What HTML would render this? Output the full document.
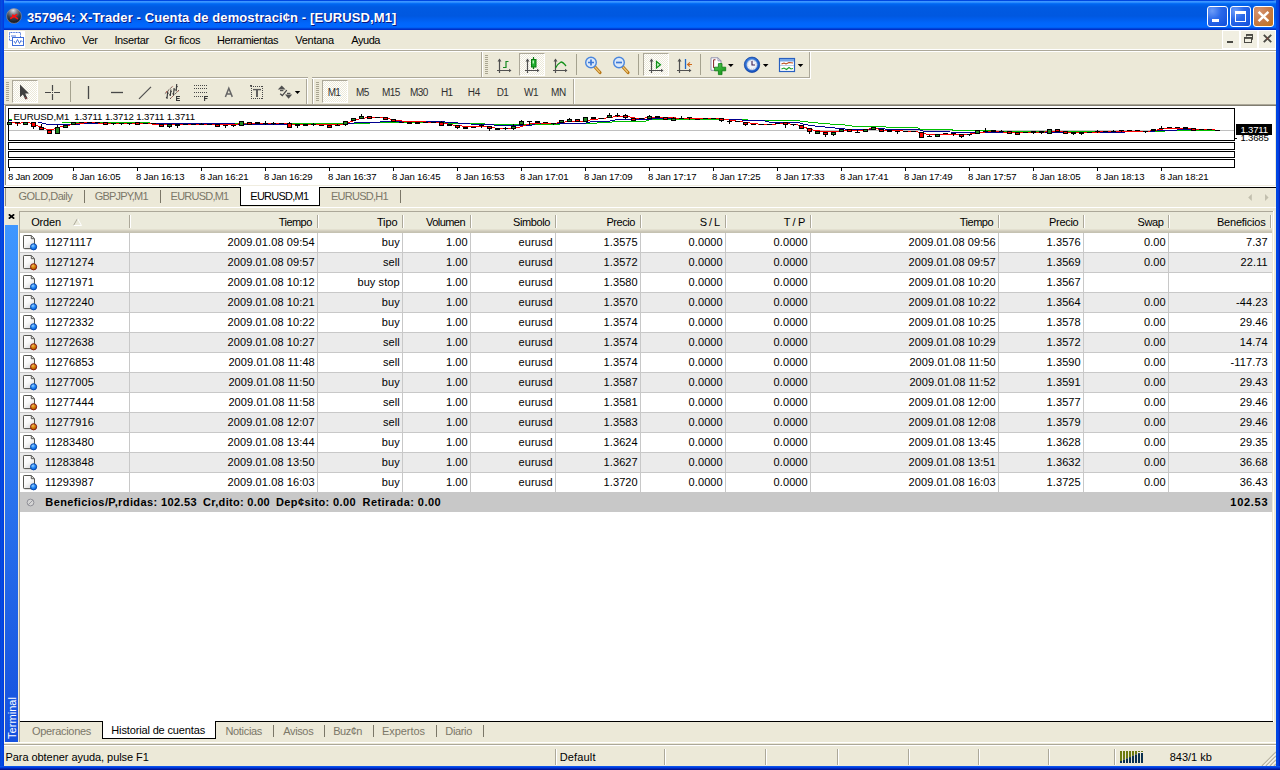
<!DOCTYPE html><html><head><meta charset="utf-8"><title>X-Trader</title><style>*{box-sizing:border-box;margin:0;padding:0}
html,body{width:1280px;height:770px;overflow:hidden;background:#ece9d8}
body{position:relative;font-family:"Liberation Sans",sans-serif;font-size:11px;color:#000}
.abs{position:absolute}
/* window frame */
#frameL{position:absolute;left:0;top:0;width:4px;height:770px;background:linear-gradient(90deg,#0831d9 0,#0855dd 1px,#0046e3 2px,#0046e3 3px,#0831d9 4px)}
#frameR{position:absolute;left:1276px;top:0;width:4px;height:770px;background:linear-gradient(90deg,#0046e3 0,#0046e3 2px,#0831d9 3px,#001ea0 4px)}
#frameB{position:absolute;left:0;top:766px;width:1280px;height:4px;background:linear-gradient(180deg,#0a52ea 0,#0a52ea 1px,#003ce0 1px,#003ce0 2px,#0026b8 2px,#0026b8 3px,#001494 3px)}
#title{position:absolute;left:0;top:0;width:1280px;height:30px;border-radius:7px 7px 0 0;
 background:linear-gradient(180deg,#0047e0 0,#0047e0 1px,#3c96ff 1.2px,#3c96ff 2.2px,#0a74fa 3px,#0064ee 4.5px,#005ae2 7px,#0058e0 16px,#005ff0 20px,#0066fb 23px,#0068ff 27px,#0058ea 28px,#0030c8 29px,#0030c8 30px)}
#tcorner{position:absolute;left:0;top:0;width:1280px;height:10px;background:#72aadf}
#title .txt{position:absolute;left:27px;top:9px;font-weight:bold;font-size:13px;letter-spacing:.11px;color:#fff;white-space:nowrap;text-shadow:1px 1px 0 #0a1883;line-height:17px}
.tb{position:absolute;top:6px;width:21px;height:21px;border:1px solid #fff;border-radius:3px;background:radial-gradient(circle at 22% 20%,#6c9cf8 0,#2b69ea 42%,#0f4dda 100%)}
.tb.close{background:radial-gradient(circle at 25% 22%,#d69470 0,#c67a4a 50%,#c27412 100%)}
/* menu */
#menu{position:absolute;left:4px;top:30px;width:1272px;height:20px;background:#ece9d8}
.mi{position:absolute;font-size:11px;line-height:14px;white-space:nowrap}
.hl{position:absolute;height:1px}
.vl{position:absolute;width:1px}
/* toolbars */
.grip{position:absolute;width:3px;height:19px;background:repeating-linear-gradient(180deg,#a9a591 0,#a9a591 1px,transparent 1px,transparent 2px)}
.pressed{position:absolute;border:1px solid;border-color:#aca899 #fff #fff #aca899;background-color:#f6f5ee;background-image:conic-gradient(#fff 25%,#ece9d8 0 50%,#fff 0 75%,#ece9d8 0);background-size:2px 2px}
.tsep{position:absolute;width:2px;height:20px;border-left:1px solid #aca899;border-right:1px solid #fff}
.per{position:absolute;font-size:10px;line-height:12px;color:#303030;white-space:nowrap}
/* chart */
.pane{position:absolute;border:1px solid #000}
.cl{position:absolute;font-size:9.6px;line-height:12px;white-space:nowrap;color:#000}
.xt{position:absolute;top:168px;width:1px;height:3px;background:#000}
/* chart tabs */
#ctabs{position:absolute;left:4px;top:188px;width:1272px;height:18px;background:#ece9d8}
.ct{position:absolute;font-size:11px;line-height:13px;color:#7b7768;white-space:nowrap}
.cts{position:absolute;top:2px;width:1px;height:13px;background:#7b7768}
/* terminal */
#term{position:absolute;left:4px;top:208px;width:1272px;height:534px;background:#ece9d8}
#list{position:absolute;left:20px;top:212px;width:1252px;height:509px;background:#fff;overflow:hidden}
#lhead{position:absolute;left:0;top:0;width:1252px;height:21px;background:linear-gradient(180deg,#ebeadb 0,#ebeadb 17px,#e2dfcf 17px,#e2dfcf 18px,#d6d2c2 18px,#d6d2c2 19px,#cbc7b8 19px,#cbc7b8 20px,#c5c2b2 20px)}
.hc{position:absolute;top:3px;height:14px;line-height:14px;font-size:11px;white-space:nowrap}
.hs{position:absolute;top:3px;width:2px;height:13px;border-left:1px solid #aca899;border-right:1px solid #fff}
.sort{position:absolute;left:53px;top:6px}
.row{position:absolute;left:0;width:1252px;height:20px;border-bottom:1px solid #c8c8c8;background:#fff}
.row.alt{background:#ebebeb}
.c{position:absolute;top:2px;height:14px;line-height:14px;font-size:11px;text-align:right;padding-right:2.2px;letter-spacing:.1px;white-space:nowrap}
.c0{text-align:left}
.c0 span{position:absolute;left:25px;top:0}
.ic{position:absolute;left:2px;top:0}
.vs{position:absolute;top:0;width:1px;height:20px;background:#c8c8c8}
#sum{position:absolute;left:0;width:1252px;height:20px;background:#c8c8c8;font-weight:bold;font-size:11px;line-height:14px}
#sum .st{position:absolute;top:3px;white-space:nowrap}
#sum .sv{position:absolute;right:4px;top:3px}
.sic{position:absolute;left:6px;top:6px}
/* bottom tabs */
.bt{position:absolute;font-size:11px;line-height:13px;color:#7b7768;white-space:nowrap}
.bts{position:absolute;top:725px;width:1px;height:12px;background:#7b7768}
/* status */
#status{position:absolute;left:4px;top:746px;width:1272px;height:20px;background:#ece9d8}
.sb{position:absolute;font-size:11px;line-height:13px;white-space:nowrap}
.ss{position:absolute;top:749px;width:2px;height:16px;border-left:1px solid #aca899;border-right:1px solid #fff}
</style></head><body>
<div id="tcorner"></div>
<div id="title">
 <svg class="abs" style="left:5.5px;top:7.5px" width="16" height="16" viewBox="0 0 16 16"><defs><radialGradient id="lg" cx="45%" cy="12%" r="85%"><stop offset="0" stop-color="#e0e0e6"/><stop offset=".3" stop-color="#85858f"/><stop offset=".6" stop-color="#3c4450"/><stop offset="1" stop-color="#14161e"/></radialGradient></defs><circle cx="8" cy="8" r="7.4" fill="url(#lg)" stroke="#9a9aa4" stroke-width=".6"/><path d="M4.8 10.3 L10.6 6.6 M6.8 7.2 L11.4 10.6" stroke="#ff1010" stroke-width="1.7" stroke-linecap="round"/></svg>
 <div class="txt" id="ttxt">357964: X-Trader - Cuenta de demostraci¢n - [EURUSD,M1]</div>
 <div class="tb" style="left:1207px"><div class="abs" style="left:4px;top:12px;width:7px;height:3px;background:#fff"></div></div>
 <div class="tb" style="left:1230px"><div class="abs" style="left:4px;top:4px;width:11px;height:11px;border:1px solid #fff;border-top-width:3px"></div></div>
 <div class="tb close" style="left:1253px"><svg class="abs" style="left:3px;top:3px" width="13" height="13" viewBox="0 0 13 13"><path d="M1.6 1.8 L11.4 11.2 M11.4 1.8 L1.6 11.2" stroke="#fff" stroke-width="2.5"/></svg></div>
</div>
<div id="frameL"></div><div id="frameR"></div><div id="frameB"></div>
<!-- menu -->
<div id="menu">
 <svg class="abs" style="left:4px;top:1px" width="17" height="17" viewBox="0 0 17 17"><rect x="0" y="0" width="17" height="17" fill="#fff"/><rect x="1.5" y="1.5" width="11" height="8" fill="#fff" stroke="#3c6cd8" stroke-dasharray="1 .6"/><rect x="4.5" y="6.5" width="11" height="8" fill="#fff" stroke="#3c6cd8"/><path d="M6 10 L7.5 12.5 L9.5 8.5 L11.5 12.5 L13 9.5 L14.5 11" fill="none" stroke="#3c6cd8" stroke-width=".9"/><path d="M3 5 H8" stroke="#3c6cd8" stroke-width=".9"/></svg>
 
 
 
 
 
 
 
 <!-- mdi buttons -->
 <div class="abs" style="left:1218px;top:0;width:54px;height:19px;background:#fff"></div>
 <div class="abs" style="left:1219px;top:1px;width:16px;height:17px;background:#f1efe2"><div class="abs" style="left:4px;top:10px;width:6px;height:2px;background:#4a4a44"></div></div>
 <div class="abs" style="left:1237px;top:1px;width:16px;height:17px;background:#f1efe2"><svg class="abs" style="left:3px;top:3px" width="10" height="10" viewBox="0 0 10 10"><path d="M2.5 2.5 V.5 H8.5 V5.5 H7.5" fill="none" stroke="#4a4a44"/><path d="M2 1 H9" stroke="#4a4a44" stroke-width="1.8"/><rect x=".5" y="3.5" width="7" height="5" fill="none" stroke="#4a4a44"/><path d="M0 4 H7.5" stroke="#4a4a44" stroke-width="1.8"/></svg></div>
 <div class="abs" style="left:1255px;top:1px;width:16px;height:17px;background:#f1efe2"><svg class="abs" style="left:3.5px;top:3px" width="9" height="9" viewBox="0 0 9 9"><path d="M.8 .8 L8.2 8.2 M8.2 .8 L.8 8.2" stroke="#4a4a44" stroke-width="1.9"/><rect x="3.5" y="3.5" width="2" height="2" fill="#7a4a40"/></svg></div>
</div>
<span class="mi" style="left:30.3px;top:33px;letter-spacing:-0.283px;">Archivo</span><span class="mi" style="left:82px;top:33px;letter-spacing:-0.237px;">Ver</span><span class="mi" style="left:114.4px;top:33px;letter-spacing:-0.361px;">Insertar</span><span class="mi" style="left:164.4px;top:33px;letter-spacing:-0.249px;">Gr&nbsp;ficos</span><span class="mi" style="left:217px;top:33px;letter-spacing:-0.419px;">Herramientas</span><span class="mi" style="left:295.3px;top:33px;letter-spacing:-0.268px;">Ventana</span><span class="mi" style="left:351.3px;top:33px;letter-spacing:-0.458px;">Ayuda</span>
<div class="hl" style="left:4px;top:49px;width:1272px;background:#fff"></div>
<div class="hl" style="left:4px;top:50px;width:1272px;background:#aca899"></div>
<div class="hl" style="left:4px;top:51px;width:1272px;background:#fff"></div>
<!-- toolbar row 1 -->
<div class="vl" style="left:481px;top:52px;height:25px;background:#aca899"></div>
<div class="vl" style="left:482px;top:52px;height:25px;background:#fff"></div>
<div class="grip" style="left:485px;top:55px"></div>
<div class="vl" style="left:809px;top:52px;height:25px;background:#aca899"></div>
<div class="vl" style="left:810px;top:52px;height:27px;background:#fff"></div>
<div class="hl" style="left:4px;top:77px;width:806px;background:#aca899"></div>
<div class="hl" style="left:4px;top:78px;width:807px;background:#fff"></div>
<div class="abs" style="left:308px;top:77px;width:4px;height:2px;background:#ece9d8"></div>
<!-- toolbar row 2 -->
<div class="grip" style="left:6px;top:82px"></div>
<div class="vl" style="left:306px;top:79px;height:25px;background:#aca899"></div>
<div class="vl" style="left:307px;top:79px;height:25px;background:#fff"></div>
<div class="vl" style="left:312px;top:79px;height:25px;background:#aca899"></div>
<div class="vl" style="left:313px;top:79px;height:25px;background:#fff"></div>
<div class="grip" style="left:316px;top:82px"></div>
<div class="vl" style="left:573px;top:79px;height:25px;background:#aca899"></div>
<div class="vl" style="left:574px;top:79px;height:25px;background:#fff"></div>
<div class="pressed" style="left:12px;top:80px;width:26px;height:23px"></div>
<div class="pressed" style="left:519px;top:53px;width:26px;height:23px"></div>
<div class="pressed" style="left:643px;top:53px;width:26px;height:23px"></div>
<svg class="abs" style="left:0;top:0" width="1280" height="110" viewBox="0 0 1280 110">
<defs>
 <radialGradient id="clk" cx="45%" cy="40%" r="60%"><stop offset="0" stop-color="#5aa0f0"/><stop offset="1" stop-color="#1450c0"/></radialGradient>
 <linearGradient id="gplus" x1="0" y1="0" x2="1" y2="1"><stop offset="0" stop-color="#58d058"/><stop offset="1" stop-color="#0a8a10"/></linearGradient>
 <linearGradient id="hnd" x1="0" y1="0" x2="1" y2="0"><stop offset="0" stop-color="#f0c878"/><stop offset="1" stop-color="#b87818"/></linearGradient>
</defs>
<g id="tb2" stroke-linecap="butt">
 <!-- arrow cursor -->
 <path d="M20 84.5 L20 97.2 L22.9 94.6 L25.3 99.6 L27.6 98.5 L25.2 93.6 L29 93.6 Z" fill="#404040"/>
 <path d="M25.4 97 L26.6 99.2" stroke="#a04040" stroke-width="1"/>
 <!-- crosshair -->
 <path d="M45 92.5 H51 M54 92.5 H60 M52.5 85 V91 M52.5 94 V100" stroke="#484848" stroke-width="1.2"/>
 <rect x="52" y="92" width="1" height="1" fill="#484848"/>
 <!-- sep -->
 <path d="M70.5 81 V102" stroke="#a5a28f"/>
 <!-- vline, hline, diagonal -->
 <path d="M88.5 86 V99" stroke="#484848" stroke-width="1.3"/>
 <path d="M111 92.5 H123" stroke="#484848" stroke-width="1.3"/>
 <path d="M139 98.8 L151 86.8" stroke="#505050" stroke-width="1.2"/>
 <!-- channel E -->
 <path d="M164.9 93.6 L172.8 86.1 M170.1 98.8 L179 90.2" stroke="#4a3838" stroke-width="1" stroke-dasharray="1.3 .9" fill="none"/>
 <path d="M166 92.3 L167 91.5 M172 87.2 L172.6 86.6 M171.6 97.4 L172.4 96.6 M177.6 91.6 L178.4 90.8" stroke="#c04030" stroke-width="1"/>
 <g stroke="#3c3c3c" stroke-width="1.15" fill="none">
  <path d="M167.7 91.2 L167 98.9 M166 97.4 L167.1 97.8 M167.6 93 L168.6 93.4"/>
  <path d="M170.9 89.5 L170.3 96 M169.3 94.6 L170.4 95 M170.8 91.2 L171.8 91.6"/>
  <path d="M174.1 88 L173.5 95.1 M172.5 93.6 L173.6 94 M174 89.6 L175 90"/>
  <path d="M176.7 84 L176.2 91.3 M175.2 89.8 L176.3 90.2 M176.6 86.2 L177.7 86.6"/>
 </g>
 <path d="M176.6 96 V101 M176 96.5 H180 M176 98.5 H179.6 M176 100.5 H180" stroke="#383838" stroke-width="1.1" fill="none"/>
 <!-- fibo F -->
 <g stroke="#484848" stroke-width="1" stroke-dasharray="1 1">
  <path d="M194 85.5 H207 M194 88.5 H207 M194 92.5 H207 M194 96.5 H203"/>
 </g>
 <path d="M204.6 96 V101 M204 96.5 H208 M204 98.5 H207.4" stroke="#383838" stroke-width="1.1" fill="none"/>
 <!-- A -->
 <path d="M225.4 96.9 L228.8 88.2 L232.3 96.9 M226.7 94 H231" stroke="#666" stroke-width="1.5" fill="none"/>
 <!-- T box -->
 <path d="M251 86.5 H263 M251 98.5 H263 M251.5 86 V99 M262.5 86 V99" fill="none" stroke="#484848" stroke-dasharray="1 1"/>
 <rect x="250" y="85" width="2" height="1.6" fill="#484848"/>
 <path d="M253 89.6 H261" stroke="#5a5a5a" stroke-width="1.4"/><path d="M257 89.6 V96.9" stroke="#5a5a5a" stroke-width="1.9"/>
 <!-- arrows icon -->
 <path d="M277.8 89.5 L281.7 85.6 L285.6 89.5 Z" fill="#505050"/>
 <rect x="280" y="90" width="3.4" height="1.2" fill="#505050"/>
 <path d="M280.2 93.8 L282.3 95.6 L286.8 90.2" stroke="#484848" stroke-width="1.3" fill="none"/>
 <rect x="287" y="92.8" width="3.4" height="1.2" fill="#505050"/>
 <path d="M285 94.5 L292.2 94.5 L288.6 98.7 Z" fill="#505050"/>
 <path d="M294.8 91 H300.2 L297.5 94 Z" fill="#000"/>
</g>
<g id="tb1">
 <!-- bar chart icon -->
 <g stroke="#505050" stroke-width="1.2" fill="none">
  <path d="M499.5 59.5 V73 M497 70.5 H510"/>
  <path d="M527.5 59.5 V73 M525 70.5 H538"/>
  <path d="M555.5 59.5 V73 M553 70.5 H566"/>
  <path d="M651.5 59.5 V73 M649 70.5 H662"/>
  <path d="M679.5 59.5 V73 M677 70.5 H690"/>
 </g>
 <g fill="#505050">
  <path d="M497.5 61.5 L499.5 58.5 L501.5 61.5 Z M509 68.8 L511.5 70.5 L509 72.2 Z"/>
  <path d="M525.5 61.5 L527.5 58.5 L529.5 61.5 Z M537 68.8 L539.5 70.5 L537 72.2 Z"/>
  <path d="M553.5 61.5 L555.5 58.5 L557.5 61.5 Z M565 68.8 L567.5 70.5 L565 72.2 Z"/>
  <path d="M649.5 61.5 L651.5 58.5 L653.5 61.5 Z M661 68.8 L663.5 70.5 L661 72.2 Z"/>
  <path d="M677.5 61.5 L679.5 58.5 L681.5 61.5 Z M689 68.8 L691.5 70.5 L689 72.2 Z"/>
 </g>
 <path d="M506 61 V68 M503 67.5 H506 M506 61.5 H508.5" stroke="#168a20" stroke-width="1.2" fill="none"/>
 <!-- candle -->
 <path d="M533.5 57 V69" stroke="#0a7a10" stroke-width="1.2"/>
 <rect x="531.5" y="59.5" width="4.5" height="7.5" fill="#22b030" stroke="#0a7a10" stroke-width="1"/>
 <rect x="532.5" y="60.5" width="1.5" height="3" fill="#b8f0b8"/>
 <!-- line -->
 <path d="M555.5 68 Q558 63.5 561 62 Q563 62 566 66" stroke="#109018" stroke-width="1.3" fill="none"/>
 <!-- seps -->
 <path d="M576.5 54 V75 M638.5 54 V75 M700.5 54 V75" stroke="#a5a28f"/>
 <!-- zoom in -->
 <path d="M594.5 66.5 L600 72.5" stroke="#b87818" stroke-width="3.2" stroke-linecap="round"/>
 <path d="M594.2 66.2 L599.5 72" stroke="#f0c878" stroke-width="1.2" stroke-linecap="round"/>
 <circle cx="591" cy="62.5" r="5.3" fill="#dbe9f9" stroke="#4a86dc" stroke-width="1.4"/>
 <path d="M588 62.5 H594 M591 59.5 V65.5" stroke="#3c78d6" stroke-width="1.7"/>
 <!-- zoom out -->
 <path d="M622.5 66.5 L628 72.5" stroke="#b87818" stroke-width="3.2" stroke-linecap="round"/>
 <path d="M622.2 66.2 L627.5 72" stroke="#f0c878" stroke-width="1.2" stroke-linecap="round"/>
 <circle cx="619" cy="62.5" r="5.3" fill="#dbe9f9" stroke="#4a86dc" stroke-width="1.4"/>
 <path d="M616 62.5 H622" stroke="#3c78d6" stroke-width="1.7"/>
 <!-- play triangle -->
 <path d="M656.5 61.5 L660.5 64.7 L656.5 68 Z" fill="#c8f0c8" stroke="#109018" stroke-width="1.2"/>
 <!-- shift -->
 <path d="M685.5 59 V69" stroke="#2068c8" stroke-width="1.3"/>
 <path d="M687.5 64.5 H692 M690 62.3 L687.5 64.5 L690 66.7" stroke="#d06818" stroke-width="1.1" fill="none"/>
 <!-- new chart -->
 <path d="M711 57.8 H718 L721 60.8 V70.3 H711 Z" fill="#fff" stroke="#8888a8" stroke-width=".9"/>
 <path d="M718 57.8 V60.8 H721" fill="none" stroke="#8888a8" stroke-width=".9"/>
 <path d="M715.5 59.8 H713.6 V67.8 H715" stroke="#802020" stroke-width="1" fill="none"/>
 <path d="M718.4 63.6 H722 V67.2 H725.7 V70.8 H722 V74.6 H718.4 V70.8 H714.6 V67.2 H718.4 Z" fill="url(#gplus)" stroke="#0a7a10" stroke-width=".8"/>
 <path d="M728 64 H733.6 L730.8 67 Z" fill="#000"/>
 <!-- clock -->
 <circle cx="752" cy="64.8" r="7.7" fill="url(#clk)" stroke="#0c3c9c" stroke-width=".7"/>
 <circle cx="752" cy="64.8" r="5.2" fill="#f0f4fa" stroke="#88a8d8" stroke-width=".6"/><circle cx="752" cy="64.8" r="4.2" fill="none" stroke="#b0b0b8" stroke-width=".8" stroke-dasharray=".7 1.5"/>
 <path d="M752 61 V65 H755" stroke="#402050" stroke-width="1.1" fill="none"/>
 <path d="M762.9 64 H768.5 L765.7 67 Z" fill="#000"/>
 <!-- template -->
 <rect x="779.5" y="58.5" width="15" height="13" fill="#fff" stroke="#2860c0" stroke-width="1.2"/>
 <rect x="780" y="59" width="14" height="2.5" fill="#78a8e8"/>
 <path d="M780 65.5 H794" stroke="#a8c0e0" stroke-width=".8"/>
 <path d="M781.5 64 L784 63 L786 64 L789 62.5 L793 63" stroke="#b84818" stroke-width="1.1" fill="none"/>
 <path d="M781.5 69 L784 68 L786.5 69.5 L789 67.5 L791 69 L793 68.5" stroke="#18a028" stroke-width="1.1" fill="none"/>
 <path d="M797.7 64 H803.3 L800.5 67 Z" fill="#000"/>
</g>
</svg>

<div class="pressed" style="left:322px;top:80px;width:26px;height:23px"></div>
<span class="per" style="left:327.7px;top:87px;letter-spacing:-0.646px;">M1</span><span class="per" style="left:356px;top:87px;letter-spacing:-0.596px;">M5</span><span class="per" style="left:382px;top:87px;letter-spacing:-0.618px;">M15</span><span class="per" style="left:410px;top:87px;letter-spacing:-0.584px;">M30</span><span class="per" style="left:440.9px;top:87px;letter-spacing:-0.642px;">H1</span><span class="per" style="left:467.7px;top:87px;letter-spacing:-0.042px;">H4</span><span class="per" style="left:496.7px;top:87px;letter-spacing:-0.592px;">D1</span><span class="per" style="left:524.1px;top:87px;letter-spacing:-0.45px;">W1</span><span class="per" style="left:551px;top:87px;letter-spacing:-0.376px;">MN</span>
<div class="hl" style="left:4px;top:104px;width:1272px;background:#aca899"></div>
<!-- chart -->
<div class="abs" style="left:4px;top:105px;width:1272px;height:80px;background:#fff"></div>
<div class="hl" style="left:4px;top:105px;width:1272px;background:#7f7c70"></div>
<div class="vl" style="left:4px;top:105px;height:80px;background:#ece9d8"></div>
<div class="vl" style="left:5px;top:105px;height:80px;background:#8f8c80"></div>
<div class="vl" style="left:1275px;top:106px;height:79px;background:#ece9d8"></div>
<div class="pane" style="left:8px;top:108px;width:1227px;height:33px"></div>
<div class="pane" style="left:8px;top:142px;width:1227px;height:8px"></div>
<div class="pane" style="left:8px;top:151px;width:1227px;height:7px"></div>
<div class="pane" style="left:8px;top:159px;width:1227px;height:9px"></div>
<svg class="abs" style="left:0;top:100px" width="1280" height="90" viewBox="0 100 1280 90" shape-rendering="crispEdges"><path d="M9 130.5 H1234" stroke="#c0c0c0" stroke-width="1"/><polyline points="62,122.3 100,122.6 235,123.7 345,123.7 400,122.2 440,122.5 455,123.5 485,124 520,124.5 535,124.5 585,123.5 610,122.5 615,121.3 645,121.3 650,119.8 700,119.8 720,119.3 740,119.5 760,120.8 800,121 815,122.8 830,124 845,125 855,126.5 885,126.5 887,127.3 917,127.5 920,129 950,129 953,130.2 975,130.6 1000,131.2 1110,131.3 1120,131 1165,131 1167,130 1195,130 1215,130" fill="none" stroke="#00c000" stroke-width="1" stroke-linejoin="round"/><polyline points="9,119.5 11.5,119.5" fill="none" stroke="#00c000" stroke-width="1" stroke-linejoin="round"/><polyline points="9,120.5 11.5,120.5" fill="none" stroke="#000090" stroke-width="1" stroke-linejoin="round"/><polyline points="38,122 48,124.5 70,124.5 80,124 100,123.6 235,124 265,124.3 345,124.3 350,123.3 365,122.3 395,121.7 440,121.6 470,124 485,124.3 500,125.5 530,125.5 535,124 585,123.3 590,122 610,121 615,120 635,119.5 650,119.3 655,118.5 715,118.5 725,119.4 740,119.4 745,120.8 765,121 770,122.3 790,122.3 800,123 805,124.5 815,126 830,127.5 845,129 860,130 867,129.5 875,128.5 885,129 900,129.5 920,130 925,131.5 950,132 975,132.3 1050,132.3 1115,132.3 1150,131.3 1165,130.5 1190,129.5 1215,130" fill="none" stroke="#000090" stroke-width="1" stroke-linejoin="round"/><polyline points="9,122.3 13,122.3 16,123.2 20,123.2 23,122.3 28,122.3 33,124 41,127 47,129.3 52,129.5 57,128 62,126.5 70,125 78,123.5 85,122.9 120,123.2 160,124.2 235,124.5 245,123 285,123.5 300,124.8 340,124.8 345,123.5 353,121 361,118.5 369,117.5 385,118 395,120 405,121.5 438,122.3 445,123.5 455,125.3 470,126.8 485,126.5 495,128 510,128.8 518,127.8 524,125.5 530,123.9 540,123 556,123.2 562,122.3 572,121.2 582,121.7 590,120 600,118.7 610,117.5 620,116 630,117 635,118 645,118 660,117.2 680,118.2 715,118.7 725,119.5 735,120.8 745,122.3 755,123.8 765,124.5 780,123.8 790,124 798,125 805,127.5 812,129.8 820,131 830,131.5 840,131 850,130.5 860,131 867,129.5 873,128 880,129.5 890,130.8 915,131.2 922,133 930,135 940,134.8 950,134.3 965,134.5 975,133.5 985,132 1000,131.8 1010,132.5 1040,132.5 1050,131.5 1060,131.2 1070,132.5 1085,133 1100,132 1120,131 1150,131 1160,129.5 1165,128.5 1170,128 1190,128 1195,129 1210,129.8 1215,130" fill="none" stroke="#ff0000" stroke-width="1" stroke-linejoin="round"/><rect x="7" y="122" width="5" height="3" fill="#000"/><rect x="8" y="123" width="3" height="1" fill="#228b22"/><rect x="17" y="122" width="1" height="4" fill="#000"/><rect x="15" y="122" width="5" height="1" fill="#000"/><rect x="23" y="122" width="5" height="3" fill="#000"/><rect x="24" y="123" width="3" height="1" fill="#228b22"/><rect x="33" y="122" width="1" height="7" fill="#000"/><rect x="31" y="122" width="5" height="5" fill="#000"/><rect x="32" y="123" width="3" height="3" fill="#ff0000"/><rect x="41" y="124" width="1" height="6" fill="#000"/><rect x="39" y="127" width="5" height="3" fill="#000"/><rect x="40" y="128" width="3" height="1" fill="#ff0000"/><rect x="47" y="130" width="5" height="4" fill="#000"/><rect x="48" y="131" width="3" height="2" fill="#ff0000"/><rect x="57" y="125" width="1" height="9" fill="#000"/><rect x="55" y="127" width="5" height="7" fill="#000"/><rect x="56" y="128" width="3" height="5" fill="#228b22"/><rect x="63" y="125" width="5" height="3" fill="#000"/><rect x="64" y="126" width="3" height="1" fill="#228b22"/><rect x="71" y="122" width="5" height="3" fill="#000"/><rect x="72" y="123" width="3" height="1" fill="#228b22"/><rect x="79" y="122" width="5" height="1" fill="#000"/><rect x="87" y="122" width="5" height="1" fill="#000"/><rect x="95" y="122" width="5" height="1" fill="#000"/><rect x="103" y="122" width="5" height="3" fill="#000"/><rect x="104" y="123" width="3" height="1" fill="#ff0000"/><rect x="113" y="123" width="1" height="2" fill="#000"/><rect x="111" y="123" width="5" height="1" fill="#000"/><rect x="121" y="123" width="1" height="2" fill="#000"/><rect x="119" y="123" width="5" height="1" fill="#000"/><rect x="129" y="123" width="1" height="2" fill="#000"/><rect x="127" y="123" width="5" height="1" fill="#000"/><rect x="135" y="122" width="5" height="3" fill="#000"/><rect x="136" y="123" width="3" height="1" fill="#ff0000"/><rect x="143" y="123" width="5" height="1" fill="#000"/><rect x="151" y="123" width="5" height="1" fill="#000"/><rect x="159" y="124" width="5" height="3" fill="#000"/><rect x="160" y="125" width="3" height="1" fill="#ff0000"/><rect x="169" y="124" width="1" height="4" fill="#000"/><rect x="167" y="124" width="5" height="3" fill="#000"/><rect x="168" y="125" width="3" height="1" fill="#228b22"/><rect x="177" y="124" width="1" height="4" fill="#000"/><rect x="175" y="124" width="5" height="2" fill="#000"/><rect x="183" y="124" width="5" height="1" fill="#000"/><rect x="191" y="124" width="5" height="1" fill="#000"/><rect x="201" y="123" width="1" height="2" fill="#000"/><rect x="199" y="124" width="5" height="1" fill="#000"/><rect x="207" y="124" width="5" height="1" fill="#000"/><rect x="215" y="124" width="5" height="3" fill="#000"/><rect x="216" y="125" width="3" height="1" fill="#ff0000"/><rect x="225" y="125" width="1" height="3" fill="#000"/><rect x="223" y="125" width="5" height="1" fill="#000"/><rect x="233" y="125" width="1" height="2" fill="#000"/><rect x="231" y="125" width="5" height="1" fill="#000"/><rect x="239" y="121" width="5" height="5" fill="#000"/><rect x="240" y="122" width="3" height="3" fill="#228b22"/><rect x="247" y="122" width="5" height="3" fill="#000"/><rect x="248" y="123" width="3" height="1" fill="#ff0000"/><rect x="255" y="122" width="5" height="2" fill="#000"/><rect x="265" y="121" width="1" height="4" fill="#000"/><rect x="263" y="123" width="5" height="1" fill="#000"/><rect x="273" y="122" width="1" height="3" fill="#000"/><rect x="271" y="123" width="5" height="1" fill="#000"/><rect x="279" y="123" width="5" height="1" fill="#000"/><rect x="289" y="122" width="1" height="6" fill="#000"/><rect x="287" y="123" width="5" height="5" fill="#000"/><rect x="288" y="124" width="3" height="3" fill="#ff0000"/><rect x="297" y="124" width="1" height="4" fill="#000"/><rect x="295" y="124" width="5" height="2" fill="#000"/><rect x="303" y="124" width="5" height="2" fill="#000"/><rect x="313" y="123" width="1" height="3" fill="#000"/><rect x="311" y="124" width="5" height="1" fill="#000"/><rect x="319" y="125" width="5" height="1" fill="#000"/><rect x="327" y="125" width="5" height="3" fill="#000"/><rect x="328" y="126" width="3" height="1" fill="#ff0000"/><rect x="337" y="124" width="1" height="2" fill="#000"/><rect x="335" y="125" width="5" height="1" fill="#000"/><rect x="345" y="121" width="1" height="5" fill="#000"/><rect x="343" y="121" width="5" height="4" fill="#000"/><rect x="344" y="122" width="3" height="2" fill="#228b22"/><rect x="351" y="118" width="5" height="3" fill="#000"/><rect x="352" y="119" width="3" height="1" fill="#228b22"/><rect x="361" y="114" width="1" height="5" fill="#000"/><rect x="359" y="116" width="5" height="3" fill="#000"/><rect x="360" y="117" width="3" height="1" fill="#228b22"/><rect x="367" y="116" width="5" height="3" fill="#000"/><rect x="368" y="117" width="3" height="1" fill="#ff0000"/><rect x="375" y="117" width="5" height="1" fill="#000"/><rect x="383" y="117" width="5" height="3" fill="#000"/><rect x="384" y="118" width="3" height="1" fill="#ff0000"/><rect x="391" y="119" width="5" height="3" fill="#000"/><rect x="392" y="120" width="3" height="1" fill="#ff0000"/><rect x="399" y="122" width="5" height="1" fill="#000"/><rect x="407" y="122" width="5" height="2" fill="#000"/><rect x="415" y="122" width="5" height="2" fill="#000"/><rect x="423" y="122" width="5" height="1" fill="#000"/><rect x="431" y="122" width="5" height="1" fill="#000"/><rect x="441" y="121" width="1" height="5" fill="#000"/><rect x="439" y="122" width="5" height="4" fill="#000"/><rect x="440" y="123" width="3" height="2" fill="#ff0000"/><rect x="447" y="124" width="5" height="2" fill="#000"/><rect x="457" y="125" width="1" height="4" fill="#000"/><rect x="455" y="125" width="5" height="3" fill="#000"/><rect x="456" y="126" width="3" height="1" fill="#ff0000"/><rect x="463" y="127" width="5" height="2" fill="#000"/><rect x="471" y="127" width="5" height="1" fill="#000"/><rect x="481" y="124" width="1" height="4" fill="#000"/><rect x="479" y="125" width="5" height="1" fill="#000"/><rect x="489" y="126" width="1" height="5" fill="#000"/><rect x="487" y="126" width="5" height="3" fill="#000"/><rect x="488" y="127" width="3" height="1" fill="#ff0000"/><rect x="495" y="128" width="5" height="2" fill="#000"/><rect x="505" y="127" width="1" height="3" fill="#000"/><rect x="503" y="128" width="5" height="1" fill="#000"/><rect x="513" y="124" width="1" height="6" fill="#000"/><rect x="511" y="126" width="5" height="3" fill="#000"/><rect x="512" y="127" width="3" height="1" fill="#228b22"/><rect x="521" y="120" width="1" height="5" fill="#000"/><rect x="519" y="121" width="5" height="4" fill="#000"/><rect x="520" y="122" width="3" height="2" fill="#228b22"/><rect x="529" y="121" width="1" height="4" fill="#000"/><rect x="527" y="121" width="5" height="1" fill="#000"/><rect x="535" y="121" width="5" height="2" fill="#000"/><rect x="543" y="122" width="5" height="1" fill="#000"/><rect x="553" y="123" width="1" height="2" fill="#000"/><rect x="551" y="123" width="5" height="1" fill="#000"/><rect x="559" y="120" width="5" height="3" fill="#000"/><rect x="560" y="121" width="3" height="1" fill="#228b22"/><rect x="569" y="118" width="1" height="4" fill="#000"/><rect x="567" y="119" width="5" height="3" fill="#000"/><rect x="568" y="120" width="3" height="1" fill="#228b22"/><rect x="575" y="119" width="5" height="3" fill="#000"/><rect x="576" y="120" width="3" height="1" fill="#ff0000"/><rect x="583" y="117" width="5" height="5" fill="#000"/><rect x="584" y="118" width="3" height="3" fill="#228b22"/><rect x="591" y="117" width="5" height="2" fill="#000"/><rect x="599" y="118" width="5" height="1" fill="#000"/><rect x="609" y="113" width="1" height="5" fill="#000"/><rect x="607" y="115" width="5" height="3" fill="#000"/><rect x="608" y="116" width="3" height="1" fill="#228b22"/><rect x="617" y="113" width="1" height="4" fill="#000"/><rect x="615" y="115" width="5" height="1" fill="#000"/><rect x="625" y="114" width="1" height="5" fill="#000"/><rect x="623" y="115" width="5" height="3" fill="#000"/><rect x="624" y="116" width="3" height="1" fill="#ff0000"/><rect x="631" y="118" width="5" height="3" fill="#000"/><rect x="632" y="119" width="3" height="1" fill="#ff0000"/><rect x="639" y="118" width="5" height="1" fill="#000"/><rect x="649" y="115" width="1" height="4" fill="#000"/><rect x="647" y="116" width="5" height="3" fill="#000"/><rect x="648" y="117" width="3" height="1" fill="#228b22"/><rect x="655" y="116" width="5" height="2" fill="#000"/><rect x="663" y="117" width="5" height="3" fill="#000"/><rect x="664" y="118" width="3" height="1" fill="#ff0000"/><rect x="673" y="117" width="1" height="4" fill="#000"/><rect x="671" y="118" width="5" height="3" fill="#000"/><rect x="672" y="119" width="3" height="1" fill="#228b22"/><rect x="681" y="116" width="1" height="3" fill="#000"/><rect x="679" y="118" width="5" height="1" fill="#000"/><rect x="689" y="117" width="1" height="3" fill="#000"/><rect x="687" y="117" width="5" height="1" fill="#000"/><rect x="695" y="119" width="5" height="1" fill="#000"/><rect x="703" y="118" width="5" height="1" fill="#000"/><rect x="711" y="118" width="5" height="1" fill="#000"/><rect x="721" y="118" width="1" height="4" fill="#000"/><rect x="719" y="118" width="5" height="3" fill="#000"/><rect x="720" y="119" width="3" height="1" fill="#ff0000"/><rect x="729" y="120" width="1" height="4" fill="#000"/><rect x="727" y="121" width="5" height="1" fill="#000"/><rect x="735" y="121" width="5" height="1" fill="#000"/><rect x="745" y="122" width="1" height="4" fill="#000"/><rect x="743" y="122" width="5" height="3" fill="#000"/><rect x="744" y="123" width="3" height="1" fill="#ff0000"/><rect x="751" y="124" width="5" height="1" fill="#000"/><rect x="759" y="124" width="5" height="1" fill="#000"/><rect x="767" y="124" width="5" height="1" fill="#000"/><rect x="775" y="123" width="5" height="1" fill="#000"/><rect x="785" y="122" width="1" height="6" fill="#000"/><rect x="783" y="122" width="5" height="3" fill="#000"/><rect x="784" y="123" width="3" height="1" fill="#ff0000"/><rect x="793" y="124" width="1" height="2" fill="#000"/><rect x="791" y="124" width="5" height="1" fill="#000"/><rect x="799" y="125" width="5" height="4" fill="#000"/><rect x="800" y="126" width="3" height="2" fill="#ff0000"/><rect x="809" y="128" width="1" height="6" fill="#000"/><rect x="807" y="128" width="5" height="4" fill="#000"/><rect x="808" y="129" width="3" height="2" fill="#ff0000"/><rect x="815" y="131" width="5" height="3" fill="#000"/><rect x="816" y="132" width="3" height="1" fill="#228b22"/><rect x="825" y="132" width="1" height="5" fill="#000"/><rect x="823" y="132" width="5" height="3" fill="#000"/><rect x="824" y="133" width="3" height="1" fill="#ff0000"/><rect x="833" y="132" width="1" height="4" fill="#000"/><rect x="831" y="132" width="5" height="3" fill="#000"/><rect x="832" y="133" width="3" height="1" fill="#228b22"/><rect x="839" y="129" width="5" height="3" fill="#000"/><rect x="840" y="130" width="3" height="1" fill="#228b22"/><rect x="847" y="129" width="5" height="3" fill="#000"/><rect x="848" y="130" width="3" height="1" fill="#ff0000"/><rect x="857" y="130" width="1" height="3" fill="#000"/><rect x="855" y="132" width="5" height="1" fill="#000"/><rect x="863" y="129" width="5" height="3" fill="#000"/><rect x="864" y="130" width="3" height="1" fill="#228b22"/><rect x="871" y="127" width="5" height="3" fill="#000"/><rect x="872" y="128" width="3" height="1" fill="#228b22"/><rect x="879" y="129" width="5" height="3" fill="#000"/><rect x="880" y="130" width="3" height="1" fill="#ff0000"/><rect x="887" y="130" width="5" height="2" fill="#000"/><rect x="897" y="131" width="1" height="3" fill="#000"/><rect x="895" y="131" width="5" height="1" fill="#000"/><rect x="903" y="131" width="5" height="1" fill="#000"/><rect x="911" y="131" width="5" height="1" fill="#000"/><rect x="919" y="132" width="5" height="6" fill="#000"/><rect x="920" y="133" width="3" height="4" fill="#ff0000"/><rect x="929" y="135" width="1" height="2" fill="#000"/><rect x="927" y="136" width="5" height="1" fill="#000"/><rect x="935" y="134" width="5" height="3" fill="#000"/><rect x="936" y="135" width="3" height="1" fill="#228b22"/><rect x="943" y="133" width="5" height="1" fill="#000"/><rect x="953" y="133" width="1" height="3" fill="#000"/><rect x="951" y="133" width="5" height="1" fill="#000"/><rect x="961" y="134" width="1" height="4" fill="#000"/><rect x="959" y="134" width="5" height="3" fill="#000"/><rect x="960" y="135" width="3" height="1" fill="#ff0000"/><rect x="969" y="134" width="1" height="2" fill="#000"/><rect x="967" y="134" width="5" height="1" fill="#000"/><rect x="975" y="130" width="5" height="4" fill="#000"/><rect x="976" y="131" width="3" height="2" fill="#228b22"/><rect x="985" y="128" width="1" height="4" fill="#000"/><rect x="983" y="131" width="5" height="1" fill="#000"/><rect x="991" y="130" width="5" height="2" fill="#000"/><rect x="1001" y="130" width="1" height="2" fill="#000"/><rect x="999" y="131" width="5" height="1" fill="#000"/><rect x="1007" y="131" width="5" height="3" fill="#000"/><rect x="1008" y="132" width="3" height="1" fill="#ff0000"/><rect x="1015" y="132" width="5" height="3" fill="#000"/><rect x="1016" y="133" width="3" height="1" fill="#ff0000"/><rect x="1023" y="132" width="5" height="1" fill="#000"/><rect x="1033" y="131" width="1" height="3" fill="#000"/><rect x="1031" y="131" width="5" height="2" fill="#000"/><rect x="1041" y="131" width="1" height="3" fill="#000"/><rect x="1039" y="131" width="5" height="2" fill="#000"/><rect x="1047" y="129" width="5" height="5" fill="#000"/><rect x="1048" y="130" width="3" height="3" fill="#228b22"/><rect x="1055" y="129" width="5" height="3" fill="#000"/><rect x="1056" y="130" width="3" height="1" fill="#ff0000"/><rect x="1063" y="131" width="5" height="3" fill="#000"/><rect x="1064" y="132" width="3" height="1" fill="#ff0000"/><rect x="1073" y="132" width="1" height="3" fill="#000"/><rect x="1071" y="132" width="5" height="2" fill="#000"/><rect x="1081" y="132" width="1" height="3" fill="#000"/><rect x="1079" y="132" width="5" height="2" fill="#000"/><rect x="1087" y="132" width="5" height="1" fill="#000"/><rect x="1097" y="130" width="1" height="3" fill="#000"/><rect x="1095" y="131" width="5" height="1" fill="#000"/><rect x="1103" y="131" width="5" height="1" fill="#000"/><rect x="1113" y="130" width="1" height="2" fill="#000"/><rect x="1111" y="131" width="5" height="1" fill="#000"/><rect x="1121" y="130" width="1" height="2" fill="#000"/><rect x="1119" y="130" width="5" height="1" fill="#000"/><rect x="1127" y="130" width="5" height="1" fill="#000"/><rect x="1135" y="130" width="5" height="1" fill="#000"/><rect x="1145" y="131" width="1" height="2" fill="#000"/><rect x="1143" y="131" width="5" height="1" fill="#000"/><rect x="1151" y="129" width="5" height="2" fill="#000"/><rect x="1161" y="126" width="1" height="3" fill="#000"/><rect x="1159" y="128" width="5" height="1" fill="#000"/><rect x="1167" y="127" width="5" height="1" fill="#000"/><rect x="1175" y="127" width="5" height="1" fill="#000"/><rect x="1183" y="127" width="5" height="2" fill="#000"/><rect x="1191" y="128" width="5" height="3" fill="#000"/><rect x="1192" y="129" width="3" height="1" fill="#ff0000"/><rect x="1199" y="129" width="5" height="1" fill="#000"/><rect x="1207" y="129" width="5" height="1" fill="#000"/><rect x="1215" y="130" width="5" height="1" fill="#000"/></svg>
<div class="xt" style="left:9px"></div><span class="cl" style="left:7.9px;top:171px;letter-spacing:-0.251px">8 Jan 2009</span><div class="xt" style="left:73px"></div><span class="cl" style="left:71.9px;top:171px;letter-spacing:-0.152px">8 Jan 16:05</span><div class="xt" style="left:137px"></div><span class="cl" style="left:135.9px;top:171px;letter-spacing:-0.152px">8 Jan 16:13</span><div class="xt" style="left:201px"></div><span class="cl" style="left:199.9px;top:171px;letter-spacing:-0.152px">8 Jan 16:21</span><div class="xt" style="left:265px"></div><span class="cl" style="left:263.9px;top:171px;letter-spacing:-0.152px">8 Jan 16:29</span><div class="xt" style="left:329px"></div><span class="cl" style="left:327.9px;top:171px;letter-spacing:-0.152px">8 Jan 16:37</span><div class="xt" style="left:393px"></div><span class="cl" style="left:391.9px;top:171px;letter-spacing:-0.152px">8 Jan 16:45</span><div class="xt" style="left:457px"></div><span class="cl" style="left:455.9px;top:171px;letter-spacing:-0.152px">8 Jan 16:53</span><div class="xt" style="left:521px"></div><span class="cl" style="left:519.9px;top:171px;letter-spacing:-0.152px">8 Jan 17:01</span><div class="xt" style="left:585px"></div><span class="cl" style="left:583.9px;top:171px;letter-spacing:-0.152px">8 Jan 17:09</span><div class="xt" style="left:649px"></div><span class="cl" style="left:647.9px;top:171px;letter-spacing:-0.152px">8 Jan 17:17</span><div class="xt" style="left:713px"></div><span class="cl" style="left:711.9px;top:171px;letter-spacing:-0.152px">8 Jan 17:25</span><div class="xt" style="left:777px"></div><span class="cl" style="left:775.9px;top:171px;letter-spacing:-0.152px">8 Jan 17:33</span><div class="xt" style="left:841px"></div><span class="cl" style="left:839.9px;top:171px;letter-spacing:-0.152px">8 Jan 17:41</span><div class="xt" style="left:905px"></div><span class="cl" style="left:903.9px;top:171px;letter-spacing:-0.152px">8 Jan 17:49</span><div class="xt" style="left:969px"></div><span class="cl" style="left:967.9px;top:171px;letter-spacing:-0.152px">8 Jan 17:57</span><div class="xt" style="left:1033px"></div><span class="cl" style="left:1031.9px;top:171px;letter-spacing:-0.152px">8 Jan 18:05</span><div class="xt" style="left:1097px"></div><span class="cl" style="left:1095.9px;top:171px;letter-spacing:-0.152px">8 Jan 18:13</span><div class="xt" style="left:1161px"></div><span class="cl" style="left:1159.9px;top:171px;letter-spacing:-0.152px">8 Jan 18:21</span>
<span class="cl" style="left:13.5px;top:111px;letter-spacing:-0.097px">EURUSD,M1&nbsp; 1.3711 1.3712 1.3711 1.3711</span>
<div class="abs" style="left:1235px;top:138px;width:2px;height:1px;background:#000"></div>
<span class="cl" style="left:1240.5px;top:132px;letter-spacing:-0.225px">1.3685</span>
<div class="abs" style="left:1236px;top:124px;width:36px;height:11px;background:#000"></div>
<span class="cl" style="left:1240.5px;top:124px;color:#fff;letter-spacing:-0.225px">1.3711</span>
<div class="hl" style="left:4px;top:185px;width:1272px;background:#f0ede0"></div>
<div class="hl" style="left:4px;top:186px;width:1272px;background:#fff"></div>
<div class="hl" style="left:4px;top:187px;width:1272px;background:#000"></div>
<!-- chart tabs -->
<div id="ctabs">
 <div class="vl" style="left:1px;top:0;height:18px;background:#8f8c80"></div>
 <div class="cts" style="left:80px"></div>
 <div class="cts" style="left:156px"></div>
 
 <div class="abs" style="left:236px;top:-1px;width:80px;height:19px;background:#fff;border:1px solid #000;border-top:none"></div>
 
 <div class="cts" style="left:396px"></div>
 <svg class="abs" style="left:1244px;top:6px" width="24" height="9" viewBox="0 0 24 9"><path d="M3.8 0 V7 L0.2 3.5 Z M17 0 V7 L20.6 3.5 Z" fill="#c2bfae"/></svg>
</div>
<span class="ct" style="left:18.5px;top:190px;letter-spacing:-0.498px;">GOLD,Daily</span><span class="ct" style="left:94.7px;top:190px;letter-spacing:-0.803px;">GBPJPY,M1</span><span class="ct" style="left:170.6px;top:190px;letter-spacing:-0.776px;">EURUSD,M1</span><span class="ct" style="left:250.3px;top:190px;letter-spacing:-0.743px;color:#000">EURUSD,M1</span><span class="ct" style="left:330.9px;top:190px;letter-spacing:-0.719px;">EURUSD,H1</span>
<div class="hl" style="left:4px;top:207px;width:1272px;background:#fff"></div>
<!-- terminal -->
<div id="term"></div>
<div class="vl" style="left:1273px;top:211px;height:511px;background:#fff"></div>
<svg class="abs" style="left:8px;top:214px" width="7" height="5" viewBox="0 0 7 5"><path d="M.8 .3 L6.2 4.7 M6.2 .3 L.8 4.7" stroke="#000" stroke-width="1.7"/></svg>
<div class="abs" style="left:5px;top:225px;width:13px;height:517px;background:linear-gradient(180deg,#3f97ff 0,#1551de 100%)"></div>
<div class="abs" style="left:6px;top:694px;width:13px;height:48px"><div style="position:absolute;left:0;top:48px;transform-origin:0 0;transform:rotate(-90deg);color:#fff;font-size:11px;line-height:13px;width:48px;height:13px;letter-spacing:.05px;padding-left:3px">Terminal</div></div>
<div class="vl" style="left:19px;top:211px;height:531px;background:#aca899"></div>
<div class="hl" style="left:19px;top:211px;width:1254px;background:#aca899"></div>

<div id="list">
<svg width="0" height="0" style="position:absolute"><defs><linearGradient id="docg" x1="0" y1="0" x2=".6" y2="1"><stop offset="0" stop-color="#fff"/><stop offset=".55" stop-color="#fafafa"/><stop offset="1" stop-color="#dedede"/></linearGradient><radialGradient id="bgb" cx="38%" cy="32%" r="70%"><stop offset="0" stop-color="#9ad0ff"/><stop offset=".55" stop-color="#1f86f5"/><stop offset="1" stop-color="#0c5ad0"/></radialGradient><radialGradient id="bgo" cx="38%" cy="32%" r="70%"><stop offset="0" stop-color="#f4bc58"/><stop offset=".55" stop-color="#d07c08"/><stop offset="1" stop-color="#a84c00"/></radialGradient></defs></svg>
<div id="lhead">
<span class="hc" style="left:11.2px;letter-spacing:-0.154px">Orden</span>
<div class="hs" style="left:109px"></div>
<span class="hc" style="left:258.8px;letter-spacing:-0.562px">Tiempo</span>
<div class="hs" style="left:297px"></div>
<span class="hc" style="left:356.9px;letter-spacing:-0.123px">Tipo</span>
<div class="hs" style="left:382px"></div>
<span class="hc" style="left:406.0px;letter-spacing:-0.544px">Volumen</span>
<div class="hs" style="left:450px"></div>
<span class="hc" style="left:493.0px;letter-spacing:-0.392px">Simbolo</span>
<div class="hs" style="left:535px"></div>
<span class="hc" style="left:586.4px;letter-spacing:-0.43px">Precio</span>
<div class="hs" style="left:620px"></div>
<span class="hc" style="left:679.7px;letter-spacing:-0.545px">S / L</span>
<div class="hs" style="left:705px"></div>
<span class="hc" style="left:763.7px;letter-spacing:-0.345px">T / P</span>
<div class="hs" style="left:790px"></div>
<span class="hc" style="left:939.8px;letter-spacing:-0.512px">Tiempo</span>
<div class="hs" style="left:978px"></div>
<span class="hc" style="left:1029.0px;letter-spacing:-0.297px">Precio</span>
<div class="hs" style="left:1063px"></div>
<span class="hc" style="left:1117.5px;letter-spacing:-0.404px">Swap</span>
<div class="hs" style="left:1148px"></div>
<span class="hc" style="left:1197.0px;letter-spacing:-0.225px">Beneficios</span>
<div class="hs" style="left:1250px"></div>
<svg class="sort" width="9" height="8" viewBox="0 0 9 8"><path d="M0.5 7.5 L4.5 0.5" stroke="#aca899" fill="none"/><path d="M4.5 0.5 L8.5 7.5 L0.5 7.5" stroke="#fff" fill="none"/></svg>
</div>
<div class="row" style="top:21px">
<div class="c c0" style="left:0;width:109px"><svg class="ic" width="17" height="16" viewBox="0 0 17 16"><path d="M1.5 1.2 Q1.5 .5 2.2 .5 H9.3 L12.5 3.7 V12.8 Q12.5 13.5 11.8 13.5 H2.2 Q1.5 13.5 1.5 12.8 Z" fill="url(#docg)" stroke="#555550" stroke-width="1"/><path d="M9.3 .8 V3.7 H12.3" fill="none" stroke="#555550" stroke-width="1"/><path d="M2.5 14.4 H12" stroke="#d0d0d0" stroke-width=".8"/><circle cx="11.6" cy="11.8" r="3.1" fill="url(#bgb)" stroke="#0a4cae" stroke-width="1"/></svg><span>11271117</span></div>
<div class="vs" style="left:109px"></div>
<div class="c" style="left:110px;width:187px">2009.01.08 09:54</div>
<div class="vs" style="left:297px"></div>
<div class="c" style="left:298px;width:84px">buy</div>
<div class="vs" style="left:382px"></div>
<div class="c" style="left:383px;width:67px">1.00</div>
<div class="vs" style="left:450px"></div>
<div class="c" style="left:451px;width:84px">eurusd</div>
<div class="vs" style="left:535px"></div>
<div class="c" style="left:536px;width:84px">1.3575</div>
<div class="vs" style="left:620px"></div>
<div class="c" style="left:621px;width:84px">0.0000</div>
<div class="vs" style="left:705px"></div>
<div class="c" style="left:706px;width:84px">0.0000</div>
<div class="vs" style="left:790px"></div>
<div class="c" style="left:791px;width:187px">2009.01.08 09:56</div>
<div class="vs" style="left:978px"></div>
<div class="c" style="left:979px;width:84px">1.3576</div>
<div class="vs" style="left:1063px"></div>
<div class="c" style="left:1064px;width:84px">0.00</div>
<div class="vs" style="left:1148px"></div>
<div class="c" style="left:1149px;width:101px">7.37</div>
</div>
<div class="row alt" style="top:41px">
<div class="c c0" style="left:0;width:109px"><svg class="ic" width="17" height="16" viewBox="0 0 17 16"><path d="M1.5 1.2 Q1.5 .5 2.2 .5 H9.3 L12.5 3.7 V12.8 Q12.5 13.5 11.8 13.5 H2.2 Q1.5 13.5 1.5 12.8 Z" fill="url(#docg)" stroke="#555550" stroke-width="1"/><path d="M9.3 .8 V3.7 H12.3" fill="none" stroke="#555550" stroke-width="1"/><path d="M2.5 14.4 H12" stroke="#d0d0d0" stroke-width=".8"/><circle cx="11.6" cy="11.8" r="3.1" fill="url(#bgo)" stroke="#8c1c10" stroke-width="1"/></svg><span>11271274</span></div>
<div class="vs" style="left:109px"></div>
<div class="c" style="left:110px;width:187px">2009.01.08 09:57</div>
<div class="vs" style="left:297px"></div>
<div class="c" style="left:298px;width:84px">sell</div>
<div class="vs" style="left:382px"></div>
<div class="c" style="left:383px;width:67px">1.00</div>
<div class="vs" style="left:450px"></div>
<div class="c" style="left:451px;width:84px">eurusd</div>
<div class="vs" style="left:535px"></div>
<div class="c" style="left:536px;width:84px">1.3572</div>
<div class="vs" style="left:620px"></div>
<div class="c" style="left:621px;width:84px">0.0000</div>
<div class="vs" style="left:705px"></div>
<div class="c" style="left:706px;width:84px">0.0000</div>
<div class="vs" style="left:790px"></div>
<div class="c" style="left:791px;width:187px">2009.01.08 09:57</div>
<div class="vs" style="left:978px"></div>
<div class="c" style="left:979px;width:84px">1.3569</div>
<div class="vs" style="left:1063px"></div>
<div class="c" style="left:1064px;width:84px">0.00</div>
<div class="vs" style="left:1148px"></div>
<div class="c" style="left:1149px;width:101px">22.11</div>
</div>
<div class="row" style="top:61px">
<div class="c c0" style="left:0;width:109px"><svg class="ic" width="17" height="16" viewBox="0 0 17 16"><path d="M1.5 1.2 Q1.5 .5 2.2 .5 H9.3 L12.5 3.7 V12.8 Q12.5 13.5 11.8 13.5 H2.2 Q1.5 13.5 1.5 12.8 Z" fill="url(#docg)" stroke="#555550" stroke-width="1"/><path d="M9.3 .8 V3.7 H12.3" fill="none" stroke="#555550" stroke-width="1"/><path d="M2.5 14.4 H12" stroke="#d0d0d0" stroke-width=".8"/><circle cx="11.6" cy="11.8" r="3.1" fill="url(#bgb)" stroke="#0a4cae" stroke-width="1"/></svg><span>11271971</span></div>
<div class="vs" style="left:109px"></div>
<div class="c" style="left:110px;width:187px">2009.01.08 10:12</div>
<div class="vs" style="left:297px"></div>
<div class="c" style="left:298px;width:84px">buy stop</div>
<div class="vs" style="left:382px"></div>
<div class="c" style="left:383px;width:67px">1.00</div>
<div class="vs" style="left:450px"></div>
<div class="c" style="left:451px;width:84px">eurusd</div>
<div class="vs" style="left:535px"></div>
<div class="c" style="left:536px;width:84px">1.3580</div>
<div class="vs" style="left:620px"></div>
<div class="c" style="left:621px;width:84px">0.0000</div>
<div class="vs" style="left:705px"></div>
<div class="c" style="left:706px;width:84px">0.0000</div>
<div class="vs" style="left:790px"></div>
<div class="c" style="left:791px;width:187px">2009.01.08 10:20</div>
<div class="vs" style="left:978px"></div>
<div class="c" style="left:979px;width:84px">1.3567</div>
<div class="vs" style="left:1063px"></div>
<div class="c" style="left:1064px;width:84px"></div>
<div class="vs" style="left:1148px"></div>
<div class="c" style="left:1149px;width:101px"></div>
</div>
<div class="row alt" style="top:81px">
<div class="c c0" style="left:0;width:109px"><svg class="ic" width="17" height="16" viewBox="0 0 17 16"><path d="M1.5 1.2 Q1.5 .5 2.2 .5 H9.3 L12.5 3.7 V12.8 Q12.5 13.5 11.8 13.5 H2.2 Q1.5 13.5 1.5 12.8 Z" fill="url(#docg)" stroke="#555550" stroke-width="1"/><path d="M9.3 .8 V3.7 H12.3" fill="none" stroke="#555550" stroke-width="1"/><path d="M2.5 14.4 H12" stroke="#d0d0d0" stroke-width=".8"/><circle cx="11.6" cy="11.8" r="3.1" fill="url(#bgb)" stroke="#0a4cae" stroke-width="1"/></svg><span>11272240</span></div>
<div class="vs" style="left:109px"></div>
<div class="c" style="left:110px;width:187px">2009.01.08 10:21</div>
<div class="vs" style="left:297px"></div>
<div class="c" style="left:298px;width:84px">buy</div>
<div class="vs" style="left:382px"></div>
<div class="c" style="left:383px;width:67px">1.00</div>
<div class="vs" style="left:450px"></div>
<div class="c" style="left:451px;width:84px">eurusd</div>
<div class="vs" style="left:535px"></div>
<div class="c" style="left:536px;width:84px">1.3570</div>
<div class="vs" style="left:620px"></div>
<div class="c" style="left:621px;width:84px">0.0000</div>
<div class="vs" style="left:705px"></div>
<div class="c" style="left:706px;width:84px">0.0000</div>
<div class="vs" style="left:790px"></div>
<div class="c" style="left:791px;width:187px">2009.01.08 10:22</div>
<div class="vs" style="left:978px"></div>
<div class="c" style="left:979px;width:84px">1.3564</div>
<div class="vs" style="left:1063px"></div>
<div class="c" style="left:1064px;width:84px">0.00</div>
<div class="vs" style="left:1148px"></div>
<div class="c" style="left:1149px;width:101px">-44.23</div>
</div>
<div class="row" style="top:101px">
<div class="c c0" style="left:0;width:109px"><svg class="ic" width="17" height="16" viewBox="0 0 17 16"><path d="M1.5 1.2 Q1.5 .5 2.2 .5 H9.3 L12.5 3.7 V12.8 Q12.5 13.5 11.8 13.5 H2.2 Q1.5 13.5 1.5 12.8 Z" fill="url(#docg)" stroke="#555550" stroke-width="1"/><path d="M9.3 .8 V3.7 H12.3" fill="none" stroke="#555550" stroke-width="1"/><path d="M2.5 14.4 H12" stroke="#d0d0d0" stroke-width=".8"/><circle cx="11.6" cy="11.8" r="3.1" fill="url(#bgb)" stroke="#0a4cae" stroke-width="1"/></svg><span>11272332</span></div>
<div class="vs" style="left:109px"></div>
<div class="c" style="left:110px;width:187px">2009.01.08 10:22</div>
<div class="vs" style="left:297px"></div>
<div class="c" style="left:298px;width:84px">buy</div>
<div class="vs" style="left:382px"></div>
<div class="c" style="left:383px;width:67px">1.00</div>
<div class="vs" style="left:450px"></div>
<div class="c" style="left:451px;width:84px">eurusd</div>
<div class="vs" style="left:535px"></div>
<div class="c" style="left:536px;width:84px">1.3574</div>
<div class="vs" style="left:620px"></div>
<div class="c" style="left:621px;width:84px">0.0000</div>
<div class="vs" style="left:705px"></div>
<div class="c" style="left:706px;width:84px">0.0000</div>
<div class="vs" style="left:790px"></div>
<div class="c" style="left:791px;width:187px">2009.01.08 10:25</div>
<div class="vs" style="left:978px"></div>
<div class="c" style="left:979px;width:84px">1.3578</div>
<div class="vs" style="left:1063px"></div>
<div class="c" style="left:1064px;width:84px">0.00</div>
<div class="vs" style="left:1148px"></div>
<div class="c" style="left:1149px;width:101px">29.46</div>
</div>
<div class="row alt" style="top:121px">
<div class="c c0" style="left:0;width:109px"><svg class="ic" width="17" height="16" viewBox="0 0 17 16"><path d="M1.5 1.2 Q1.5 .5 2.2 .5 H9.3 L12.5 3.7 V12.8 Q12.5 13.5 11.8 13.5 H2.2 Q1.5 13.5 1.5 12.8 Z" fill="url(#docg)" stroke="#555550" stroke-width="1"/><path d="M9.3 .8 V3.7 H12.3" fill="none" stroke="#555550" stroke-width="1"/><path d="M2.5 14.4 H12" stroke="#d0d0d0" stroke-width=".8"/><circle cx="11.6" cy="11.8" r="3.1" fill="url(#bgo)" stroke="#8c1c10" stroke-width="1"/></svg><span>11272638</span></div>
<div class="vs" style="left:109px"></div>
<div class="c" style="left:110px;width:187px">2009.01.08 10:27</div>
<div class="vs" style="left:297px"></div>
<div class="c" style="left:298px;width:84px">sell</div>
<div class="vs" style="left:382px"></div>
<div class="c" style="left:383px;width:67px">1.00</div>
<div class="vs" style="left:450px"></div>
<div class="c" style="left:451px;width:84px">eurusd</div>
<div class="vs" style="left:535px"></div>
<div class="c" style="left:536px;width:84px">1.3574</div>
<div class="vs" style="left:620px"></div>
<div class="c" style="left:621px;width:84px">0.0000</div>
<div class="vs" style="left:705px"></div>
<div class="c" style="left:706px;width:84px">0.0000</div>
<div class="vs" style="left:790px"></div>
<div class="c" style="left:791px;width:187px">2009.01.08 10:29</div>
<div class="vs" style="left:978px"></div>
<div class="c" style="left:979px;width:84px">1.3572</div>
<div class="vs" style="left:1063px"></div>
<div class="c" style="left:1064px;width:84px">0.00</div>
<div class="vs" style="left:1148px"></div>
<div class="c" style="left:1149px;width:101px">14.74</div>
</div>
<div class="row" style="top:141px">
<div class="c c0" style="left:0;width:109px"><svg class="ic" width="17" height="16" viewBox="0 0 17 16"><path d="M1.5 1.2 Q1.5 .5 2.2 .5 H9.3 L12.5 3.7 V12.8 Q12.5 13.5 11.8 13.5 H2.2 Q1.5 13.5 1.5 12.8 Z" fill="url(#docg)" stroke="#555550" stroke-width="1"/><path d="M9.3 .8 V3.7 H12.3" fill="none" stroke="#555550" stroke-width="1"/><path d="M2.5 14.4 H12" stroke="#d0d0d0" stroke-width=".8"/><circle cx="11.6" cy="11.8" r="3.1" fill="url(#bgo)" stroke="#8c1c10" stroke-width="1"/></svg><span>11276853</span></div>
<div class="vs" style="left:109px"></div>
<div class="c" style="left:110px;width:187px">2009.01.08 11:48</div>
<div class="vs" style="left:297px"></div>
<div class="c" style="left:298px;width:84px">sell</div>
<div class="vs" style="left:382px"></div>
<div class="c" style="left:383px;width:67px">1.00</div>
<div class="vs" style="left:450px"></div>
<div class="c" style="left:451px;width:84px">eurusd</div>
<div class="vs" style="left:535px"></div>
<div class="c" style="left:536px;width:84px">1.3574</div>
<div class="vs" style="left:620px"></div>
<div class="c" style="left:621px;width:84px">0.0000</div>
<div class="vs" style="left:705px"></div>
<div class="c" style="left:706px;width:84px">0.0000</div>
<div class="vs" style="left:790px"></div>
<div class="c" style="left:791px;width:187px">2009.01.08 11:50</div>
<div class="vs" style="left:978px"></div>
<div class="c" style="left:979px;width:84px">1.3590</div>
<div class="vs" style="left:1063px"></div>
<div class="c" style="left:1064px;width:84px">0.00</div>
<div class="vs" style="left:1148px"></div>
<div class="c" style="left:1149px;width:101px">-117.73</div>
</div>
<div class="row alt" style="top:161px">
<div class="c c0" style="left:0;width:109px"><svg class="ic" width="17" height="16" viewBox="0 0 17 16"><path d="M1.5 1.2 Q1.5 .5 2.2 .5 H9.3 L12.5 3.7 V12.8 Q12.5 13.5 11.8 13.5 H2.2 Q1.5 13.5 1.5 12.8 Z" fill="url(#docg)" stroke="#555550" stroke-width="1"/><path d="M9.3 .8 V3.7 H12.3" fill="none" stroke="#555550" stroke-width="1"/><path d="M2.5 14.4 H12" stroke="#d0d0d0" stroke-width=".8"/><circle cx="11.6" cy="11.8" r="3.1" fill="url(#bgb)" stroke="#0a4cae" stroke-width="1"/></svg><span>11277005</span></div>
<div class="vs" style="left:109px"></div>
<div class="c" style="left:110px;width:187px">2009.01.08 11:50</div>
<div class="vs" style="left:297px"></div>
<div class="c" style="left:298px;width:84px">buy</div>
<div class="vs" style="left:382px"></div>
<div class="c" style="left:383px;width:67px">1.00</div>
<div class="vs" style="left:450px"></div>
<div class="c" style="left:451px;width:84px">eurusd</div>
<div class="vs" style="left:535px"></div>
<div class="c" style="left:536px;width:84px">1.3587</div>
<div class="vs" style="left:620px"></div>
<div class="c" style="left:621px;width:84px">0.0000</div>
<div class="vs" style="left:705px"></div>
<div class="c" style="left:706px;width:84px">0.0000</div>
<div class="vs" style="left:790px"></div>
<div class="c" style="left:791px;width:187px">2009.01.08 11:52</div>
<div class="vs" style="left:978px"></div>
<div class="c" style="left:979px;width:84px">1.3591</div>
<div class="vs" style="left:1063px"></div>
<div class="c" style="left:1064px;width:84px">0.00</div>
<div class="vs" style="left:1148px"></div>
<div class="c" style="left:1149px;width:101px">29.43</div>
</div>
<div class="row" style="top:181px">
<div class="c c0" style="left:0;width:109px"><svg class="ic" width="17" height="16" viewBox="0 0 17 16"><path d="M1.5 1.2 Q1.5 .5 2.2 .5 H9.3 L12.5 3.7 V12.8 Q12.5 13.5 11.8 13.5 H2.2 Q1.5 13.5 1.5 12.8 Z" fill="url(#docg)" stroke="#555550" stroke-width="1"/><path d="M9.3 .8 V3.7 H12.3" fill="none" stroke="#555550" stroke-width="1"/><path d="M2.5 14.4 H12" stroke="#d0d0d0" stroke-width=".8"/><circle cx="11.6" cy="11.8" r="3.1" fill="url(#bgo)" stroke="#8c1c10" stroke-width="1"/></svg><span>11277444</span></div>
<div class="vs" style="left:109px"></div>
<div class="c" style="left:110px;width:187px">2009.01.08 11:58</div>
<div class="vs" style="left:297px"></div>
<div class="c" style="left:298px;width:84px">sell</div>
<div class="vs" style="left:382px"></div>
<div class="c" style="left:383px;width:67px">1.00</div>
<div class="vs" style="left:450px"></div>
<div class="c" style="left:451px;width:84px">eurusd</div>
<div class="vs" style="left:535px"></div>
<div class="c" style="left:536px;width:84px">1.3581</div>
<div class="vs" style="left:620px"></div>
<div class="c" style="left:621px;width:84px">0.0000</div>
<div class="vs" style="left:705px"></div>
<div class="c" style="left:706px;width:84px">0.0000</div>
<div class="vs" style="left:790px"></div>
<div class="c" style="left:791px;width:187px">2009.01.08 12:00</div>
<div class="vs" style="left:978px"></div>
<div class="c" style="left:979px;width:84px">1.3577</div>
<div class="vs" style="left:1063px"></div>
<div class="c" style="left:1064px;width:84px">0.00</div>
<div class="vs" style="left:1148px"></div>
<div class="c" style="left:1149px;width:101px">29.46</div>
</div>
<div class="row alt" style="top:201px">
<div class="c c0" style="left:0;width:109px"><svg class="ic" width="17" height="16" viewBox="0 0 17 16"><path d="M1.5 1.2 Q1.5 .5 2.2 .5 H9.3 L12.5 3.7 V12.8 Q12.5 13.5 11.8 13.5 H2.2 Q1.5 13.5 1.5 12.8 Z" fill="url(#docg)" stroke="#555550" stroke-width="1"/><path d="M9.3 .8 V3.7 H12.3" fill="none" stroke="#555550" stroke-width="1"/><path d="M2.5 14.4 H12" stroke="#d0d0d0" stroke-width=".8"/><circle cx="11.6" cy="11.8" r="3.1" fill="url(#bgo)" stroke="#8c1c10" stroke-width="1"/></svg><span>11277916</span></div>
<div class="vs" style="left:109px"></div>
<div class="c" style="left:110px;width:187px">2009.01.08 12:07</div>
<div class="vs" style="left:297px"></div>
<div class="c" style="left:298px;width:84px">sell</div>
<div class="vs" style="left:382px"></div>
<div class="c" style="left:383px;width:67px">1.00</div>
<div class="vs" style="left:450px"></div>
<div class="c" style="left:451px;width:84px">eurusd</div>
<div class="vs" style="left:535px"></div>
<div class="c" style="left:536px;width:84px">1.3583</div>
<div class="vs" style="left:620px"></div>
<div class="c" style="left:621px;width:84px">0.0000</div>
<div class="vs" style="left:705px"></div>
<div class="c" style="left:706px;width:84px">0.0000</div>
<div class="vs" style="left:790px"></div>
<div class="c" style="left:791px;width:187px">2009.01.08 12:08</div>
<div class="vs" style="left:978px"></div>
<div class="c" style="left:979px;width:84px">1.3579</div>
<div class="vs" style="left:1063px"></div>
<div class="c" style="left:1064px;width:84px">0.00</div>
<div class="vs" style="left:1148px"></div>
<div class="c" style="left:1149px;width:101px">29.46</div>
</div>
<div class="row" style="top:221px">
<div class="c c0" style="left:0;width:109px"><svg class="ic" width="17" height="16" viewBox="0 0 17 16"><path d="M1.5 1.2 Q1.5 .5 2.2 .5 H9.3 L12.5 3.7 V12.8 Q12.5 13.5 11.8 13.5 H2.2 Q1.5 13.5 1.5 12.8 Z" fill="url(#docg)" stroke="#555550" stroke-width="1"/><path d="M9.3 .8 V3.7 H12.3" fill="none" stroke="#555550" stroke-width="1"/><path d="M2.5 14.4 H12" stroke="#d0d0d0" stroke-width=".8"/><circle cx="11.6" cy="11.8" r="3.1" fill="url(#bgb)" stroke="#0a4cae" stroke-width="1"/></svg><span>11283480</span></div>
<div class="vs" style="left:109px"></div>
<div class="c" style="left:110px;width:187px">2009.01.08 13:44</div>
<div class="vs" style="left:297px"></div>
<div class="c" style="left:298px;width:84px">buy</div>
<div class="vs" style="left:382px"></div>
<div class="c" style="left:383px;width:67px">1.00</div>
<div class="vs" style="left:450px"></div>
<div class="c" style="left:451px;width:84px">eurusd</div>
<div class="vs" style="left:535px"></div>
<div class="c" style="left:536px;width:84px">1.3624</div>
<div class="vs" style="left:620px"></div>
<div class="c" style="left:621px;width:84px">0.0000</div>
<div class="vs" style="left:705px"></div>
<div class="c" style="left:706px;width:84px">0.0000</div>
<div class="vs" style="left:790px"></div>
<div class="c" style="left:791px;width:187px">2009.01.08 13:45</div>
<div class="vs" style="left:978px"></div>
<div class="c" style="left:979px;width:84px">1.3628</div>
<div class="vs" style="left:1063px"></div>
<div class="c" style="left:1064px;width:84px">0.00</div>
<div class="vs" style="left:1148px"></div>
<div class="c" style="left:1149px;width:101px">29.35</div>
</div>
<div class="row alt" style="top:241px">
<div class="c c0" style="left:0;width:109px"><svg class="ic" width="17" height="16" viewBox="0 0 17 16"><path d="M1.5 1.2 Q1.5 .5 2.2 .5 H9.3 L12.5 3.7 V12.8 Q12.5 13.5 11.8 13.5 H2.2 Q1.5 13.5 1.5 12.8 Z" fill="url(#docg)" stroke="#555550" stroke-width="1"/><path d="M9.3 .8 V3.7 H12.3" fill="none" stroke="#555550" stroke-width="1"/><path d="M2.5 14.4 H12" stroke="#d0d0d0" stroke-width=".8"/><circle cx="11.6" cy="11.8" r="3.1" fill="url(#bgb)" stroke="#0a4cae" stroke-width="1"/></svg><span>11283848</span></div>
<div class="vs" style="left:109px"></div>
<div class="c" style="left:110px;width:187px">2009.01.08 13:50</div>
<div class="vs" style="left:297px"></div>
<div class="c" style="left:298px;width:84px">buy</div>
<div class="vs" style="left:382px"></div>
<div class="c" style="left:383px;width:67px">1.00</div>
<div class="vs" style="left:450px"></div>
<div class="c" style="left:451px;width:84px">eurusd</div>
<div class="vs" style="left:535px"></div>
<div class="c" style="left:536px;width:84px">1.3627</div>
<div class="vs" style="left:620px"></div>
<div class="c" style="left:621px;width:84px">0.0000</div>
<div class="vs" style="left:705px"></div>
<div class="c" style="left:706px;width:84px">0.0000</div>
<div class="vs" style="left:790px"></div>
<div class="c" style="left:791px;width:187px">2009.01.08 13:51</div>
<div class="vs" style="left:978px"></div>
<div class="c" style="left:979px;width:84px">1.3632</div>
<div class="vs" style="left:1063px"></div>
<div class="c" style="left:1064px;width:84px">0.00</div>
<div class="vs" style="left:1148px"></div>
<div class="c" style="left:1149px;width:101px">36.68</div>
</div>
<div class="row" style="top:261px">
<div class="c c0" style="left:0;width:109px"><svg class="ic" width="17" height="16" viewBox="0 0 17 16"><path d="M1.5 1.2 Q1.5 .5 2.2 .5 H9.3 L12.5 3.7 V12.8 Q12.5 13.5 11.8 13.5 H2.2 Q1.5 13.5 1.5 12.8 Z" fill="url(#docg)" stroke="#555550" stroke-width="1"/><path d="M9.3 .8 V3.7 H12.3" fill="none" stroke="#555550" stroke-width="1"/><path d="M2.5 14.4 H12" stroke="#d0d0d0" stroke-width=".8"/><circle cx="11.6" cy="11.8" r="3.1" fill="url(#bgb)" stroke="#0a4cae" stroke-width="1"/></svg><span>11293987</span></div>
<div class="vs" style="left:109px"></div>
<div class="c" style="left:110px;width:187px">2009.01.08 16:03</div>
<div class="vs" style="left:297px"></div>
<div class="c" style="left:298px;width:84px">buy</div>
<div class="vs" style="left:382px"></div>
<div class="c" style="left:383px;width:67px">1.00</div>
<div class="vs" style="left:450px"></div>
<div class="c" style="left:451px;width:84px">eurusd</div>
<div class="vs" style="left:535px"></div>
<div class="c" style="left:536px;width:84px">1.3720</div>
<div class="vs" style="left:620px"></div>
<div class="c" style="left:621px;width:84px">0.0000</div>
<div class="vs" style="left:705px"></div>
<div class="c" style="left:706px;width:84px">0.0000</div>
<div class="vs" style="left:790px"></div>
<div class="c" style="left:791px;width:187px">2009.01.08 16:03</div>
<div class="vs" style="left:978px"></div>
<div class="c" style="left:979px;width:84px">1.3725</div>
<div class="vs" style="left:1063px"></div>
<div class="c" style="left:1064px;width:84px">0.00</div>
<div class="vs" style="left:1148px"></div>
<div class="c" style="left:1149px;width:101px">36.43</div>
</div>
<div id="sum" style="top:280px"><svg class="sic" width="9" height="9" viewBox="0 0 9 9"><circle cx="4.5" cy="4.5" r="3.4" fill="#d4d4d4" stroke="#8a8a92" stroke-width=".9"/><path d="M2.3 6.7 L6.7 2.3" stroke="#8a8a92" stroke-width=".8"/></svg><span class="st" style="left:25.3px;letter-spacing:0.395px">Beneficios/P,rdidas: 102.53</span><span class="st" style="left:183.0px;letter-spacing:0.311px">Cr,dito: 0.00</span><span class="st" style="left:256.0px;letter-spacing:0.387px">Dep¢sito: 0.00</span><span class="st" style="left:342.5px;letter-spacing:0.461px">Retirada: 0.00</span><span class="st" style="left:1210.3px;letter-spacing:0.726px">102.53</span></div>
</div>
<div class="hl" style="left:20px;top:721px;width:1253px;background:#000"></div>

<div class="abs" style="left:102px;top:721px;width:114px;height:18px;background:#fff;border:1px solid #000;border-top:none"></div>

<div class="bts" style="left:273px"></div>
<div class="bts" style="left:324px"></div>
<div class="bts" style="left:373px"></div>
<div class="bts" style="left:436px"></div>
<div class="bts" style="left:483px"></div>
<div class="hl" style="left:4px;top:742px;width:1272px;background:#fff"></div>
<div class="hl" style="left:4px;top:744px;width:1272px;background:#aca899"></div>
<div class="hl" style="left:4px;top:745px;width:1272px;background:#fff"></div>
<div class="ss" style="left:555px"></div>
<div class="ss" style="left:664px"></div>
<div class="ss" style="left:765px"></div>
<div class="ss" style="left:837px"></div>
<div class="ss" style="left:908px"></div>
<div class="ss" style="left:978px"></div>
<div class="ss" style="left:1048px"></div>
<div class="ss" style="left:1114px"></div>
<svg class="abs" style="left:1120px;top:750px" width="24" height="14" viewBox="0 0 24 14"><rect x="0" y="1" width="2" height="10.0" fill="#6b7a10"/><rect x="0" y="11.0" width="2" height="2.0" fill="#0a3050"/><rect x="3" y="1" width="2" height="8.7" fill="#6b7a10"/><rect x="3" y="9.7" width="2" height="3.3" fill="#0a3050"/><rect x="6" y="1" width="2" height="7.4" fill="#6b7a10"/><rect x="6" y="8.4" width="2" height="4.6" fill="#0a3050"/><rect x="9" y="1" width="2" height="6.1" fill="#6b7a10"/><rect x="9" y="7.1" width="2" height="5.9" fill="#0a3050"/><rect x="12" y="1" width="2" height="4.8" fill="#6b7a10"/><rect x="12" y="5.8" width="2" height="7.2" fill="#0a3050"/><rect x="15" y="1" width="2" height="3.5" fill="#6b7a10"/><rect x="15" y="4.5" width="2" height="8.5" fill="#0a3050"/><rect x="18" y="1" width="2" height="2.2" fill="#6b7a10"/><rect x="18" y="3.2" width="2" height="9.8" fill="#0a3050"/><rect x="21" y="1" width="2" height="0.9" fill="#6b7a10"/><rect x="21" y="1.9" width="2" height="11.1" fill="#0a3050"/><rect x="18" y="2" width="2" height="1" fill="#ece9d8"/><rect x="21" y="2" width="2" height="1" fill="#ece9d8"/></svg><svg class="abs" style="left:1261px;top:751px" width="15" height="15" viewBox="0 0 15 15"><path d="M15 1 L1 15 M15 5 L5 15 M15 9 L9 15 M15 13 L13 15" stroke="#b8b4a2" stroke-width="1.4"/><path d="M15 2.4 L2.4 15 M15 6.4 L6.4 15 M15 10.4 L10.4 15" stroke="#fff" stroke-width=".9"/></svg>
<span class="bt" style="left:32px;top:725px;letter-spacing:-0.306px;">Operaciones</span><span class="bt" style="left:111.3px;top:724px;letter-spacing:-0.145px;color:#000">Historial de cuentas</span><span class="bt" style="left:225.4px;top:725px;letter-spacing:-0.315px;">Noticias</span><span class="bt" style="left:283.2px;top:725px;letter-spacing:-0.35px;">Avisos</span><span class="bt" style="left:333.2px;top:725px;letter-spacing:-0.478px;">Buz¢n</span><span class="bt" style="left:382px;top:725px;letter-spacing:-0.051px;">Expertos</span><span class="bt" style="left:445.3px;top:725px;letter-spacing:-0.338px;">Diario</span>
<span class="sb" style="left:5.5px;top:751px;letter-spacing:-0.058px;">Para obtener ayuda, pulse F1</span><span class="sb" style="left:559.7px;top:751px;letter-spacing:0.164px;">Default</span><span class="sb" style="left:1169.7px;top:751px;letter-spacing:-0.013px;">843/1 kb</span>

</body></html>
